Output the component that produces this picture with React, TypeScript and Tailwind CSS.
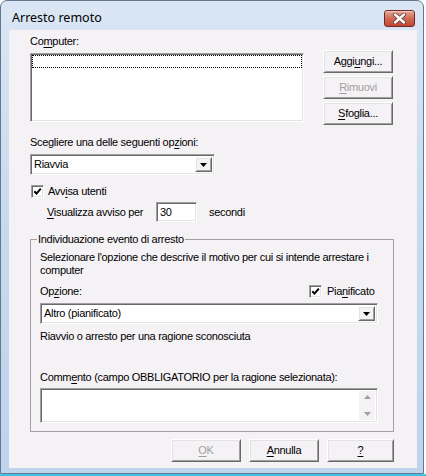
import type { ReactNode } from "react";

const sunken =
  "bg-white border border-t-[#a0a0a0] border-l-[#a0a0a0] border-r-white border-b-white shadow-[inset_1px_1px_0_#696969,inset_-1px_-1px_0_#e3e3e3]";
const raised =
  "border border-t-white border-l-white border-r-[#696969] border-b-[#696969] shadow-[inset_1px_1px_0_#e3e3e3,inset_-1px_-1px_0_#a0a0a0]";

function U({ children }: { children: ReactNode }) {
  return <span className="underline decoration-1 underline-offset-[2px]">{children}</span>;
}

function Btn({
  children,
  disabled,
  className,
}: {
  children: ReactNode;
  disabled?: boolean;
  className: string;
}) {
  return (
    <div
      className={`${raised} ${className} h-[23px] bg-[#f5f2f5] flex items-center justify-center ${
        disabled ? "text-[#a0a0a0]" : "text-black"
      }`}
    >
      {children}
    </div>
  );
}

function Check() {
  return (
    <div className={`${sunken} w-[13px] h-[13px] shrink-0 flex items-center justify-center`}>
      <svg width="9" height="9" viewBox="0 0 9 9">
        <path d="M1.3 4.2 L3.5 6.6 L7.8 1.6" stroke="#000" strokeWidth="2" fill="none" />
      </svg>
    </div>
  );
}

function Combo({ text, className }: { text: string; className: string }) {
  return (
    <div className={`${sunken} ${className} h-[21px] flex items-center p-[2px]`}>
      <span className="flex-1 pl-[1px]">{text}</span>
      <div className={`${raised} w-[17px] h-full bg-[#f5f2f5] flex items-center justify-center`}>
        <svg width="7" height="4" viewBox="0 0 7 4">
          <path d="M0 0h7L3.5 4z" fill="#000" />
        </svg>
      </div>
    </div>
  );
}

function CloseBtn() {
  return (
    <div className="mt-[9px] w-[31px] h-[17px] rounded-[3px] border border-[#6f2a26] bg-gradient-to-b from-[#e5a597] via-[#cf6a56] to-[#c2432f] shadow-[inset_0_1px_0_#f3c8bd] flex items-center justify-center">
      <svg width="13" height="11" viewBox="0 0 13 11">
        <path
          d="M2 1.5 L11 9.5 M11 1.5 L2 9.5"
          stroke="#5a3a36"
          strokeWidth="4"
          strokeLinecap="round"
        />
        <path
          d="M2 1.5 L11 9.5 M11 1.5 L2 9.5"
          stroke="#fff"
          strokeWidth="2.4"
          strokeLinecap="round"
        />
      </svg>
    </div>
  );
}

export default function App() {
  return (
    <div className="w-[426px] h-[476px] bg-white flex flex-col font-['Liberation_Sans',Arial,sans-serif] text-[11px] leading-[13px] tracking-[-0.3px] text-black">
      <div className="w-[424px] h-[474px] rounded-t-[7px] border border-[#66788e] bg-gradient-to-b from-[#dae6f4] via-[#c6d9ef] to-[#bed4ed] flex flex-col pl-[8px] pr-[6px] pb-[5px]">
        <div className="h-[29px] flex items-start justify-between pl-[3px] pr-[2px]">
          <span className="mt-[9px] font-['Noto_Sans','Open_Sans',sans-serif] text-[12.5px] leading-[16px] tracking-normal">
            Arresto remoto
          </span>
          <CloseBtn />
        </div>

        <div className="flex-1 bg-[#f5f2f5] pl-[21px] pr-[23px] pt-[5px] flex flex-col">
          <div>
            Co<U>m</U>puter:
          </div>

          <div className="mt-[2px] flex">
            <div className={`${sunken} mt-[3px] w-[274px] h-[69px] p-[1px]`}>
              <div className="h-[13px] border border-dotted border-black" />
            </div>
            <div className="ml-auto mr-[1px] w-[70px] flex flex-col gap-[3px]">
              <Btn className="w-[70px]">
                Aggi<U>u</U>ngi...
              </Btn>
              <Btn className="w-[70px]" disabled>
                <U>R</U>imuovi
              </Btn>
              <Btn className="w-[70px]">
                <U>S</U>foglia...
              </Btn>
            </div>
          </div>

          <div className="mt-[11px]">
            Scegliere una delle seguenti op<U>z</U>ioni:
          </div>
          <Combo text="Riavvia" className="mt-[5px] w-[185px]" />

          <div className="mt-[10px] ml-[1px] flex items-center gap-[4px]">
            <Check />
            <span>
              Avv<U>i</U>sa utenti
            </span>
          </div>

          <div className="mt-[4px] pl-[17px] flex items-center">
            <span className="w-[109px]">
              <U>V</U>isualizza avviso per
            </span>
            <div className={`${sunken} w-[41px] h-[20px] flex items-center pl-[3px]`}>30</div>
            <span className="ml-[12px]">secondi</span>
          </div>

          <fieldset className="mt-[11px] m-0 p-0 min-w-0 border border-[#a0a0a0]">
            <legend className="ml-[6px] px-[1px]">Individuazione evento di arresto</legend>
            <div className="pl-[9px] pr-[14px] pt-[5px] pb-[8px] flex flex-col">
              <div className="whitespace-nowrap">
                Selezionare l'opzione che descrive il motivo per cui si intende arrestare i
                <br />
                computer
              </div>

              <div className="mt-[8px] flex items-center">
                <span className="w-[269px]">
                  Op<U>z</U>ione:
                </span>
                <Check />
                <span className="ml-[5px]">
                  Pia<U>n</U>ificato
                </span>
              </div>

              <Combo text="Altro (pianificato)" className="mt-[5px] w-[338px]" />

              <div className="mt-[6px]">Riavvio o arresto per una ragione sconosciuta</div>

              <div className="mt-[28px]">
                Comm<U>e</U>nto (campo OBBLIGATORIO per la ragione selezionata):
              </div>

              <div className={`${sunken} mt-[4px] w-[338px] h-[35px] flex p-[2px]`}>
                <div className="flex-1" />
                <div className="w-[17px] h-full bg-[#f5f2f5] border-l border-white flex flex-col items-center justify-between py-[4px]">
                  <svg width="7" height="4" viewBox="0 0 7 4">
                    <path d="M0 4h7L3.5 0z" fill="#a0a0a0" />
                  </svg>
                  <svg width="7" height="4" viewBox="0 0 7 4">
                    <path d="M0 0h7L3.5 4z" fill="#a0a0a0" />
                  </svg>
                </div>
              </div>
            </div>
          </fieldset>

          <div className="mt-[7px] flex justify-end gap-[8px]">
            <Btn className="w-[70px]" disabled>
              <U>O</U>K
            </Btn>
            <Btn className="w-[70px]">
              <U>A</U>nnulla
            </Btn>
            <Btn className="w-[67px]">
              <U>?</U>
            </Btn>
          </div>
        </div>
      </div>
      <div className="h-[2px] bg-[#3cc4e2]" />
    </div>
  );
}
